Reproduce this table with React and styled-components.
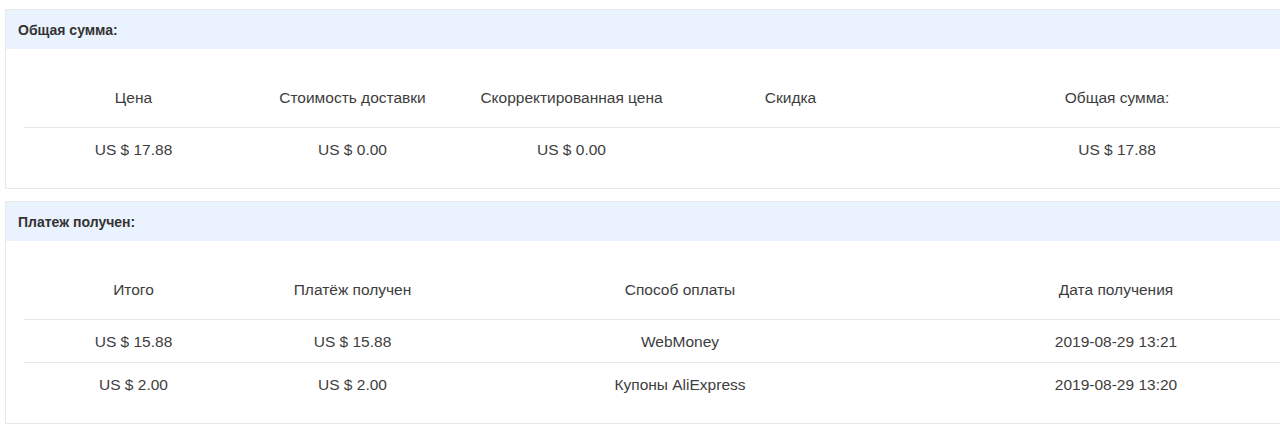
import React from "react";
import styled, {createGlobalStyle} from "styled-components";

const GlobalStyle = createGlobalStyle`
    html, body {
        margin: 0;
        padding: 0;
        background: #fff;
        overflow: hidden;
    }
    body {
        font-family: "Liberation Sans", Arial, sans-serif;
        color: #333;
    }
`

const Page = styled.div`
    display: flex;
    flex-direction: column;
    gap: 12px;
    padding: 9px 0 0 5px;
    width: 1360px;
`

const Panel = styled.section`
    border: 1px solid #e8e8e8;
    background: #fff;
`

const PanelHeader = styled.div`
    height: 39px;
    display: flex;
    align-items: center;
    padding: 1px 0 0 12px;
    box-sizing: border-box;
    background: #eaf2fd;
    font-size: 14px;
    font-weight: bold;
    color: #333;
`

const PanelBody = styled.div`
    padding: 20px 18px 18px 18px;
`

const Table = styled.table`
    width: 1310px;
    border-collapse: collapse;
    table-layout: fixed;
    font-size: 15.5px;
    color: #3d3d3d;
`

const HeadCell = styled.th`
    height: 58px;
    font-weight: normal;
    text-align: center;
    vertical-align: middle;
    border-bottom: 1px solid #e6e6e6;
    padding: 0;
`

const Cell = styled.td`
    height: 41px;
    text-align: center;
    vertical-align: middle;
    padding: 1px 0 0;
    border-bottom: ${p => (p.$last ? "none" : "1px solid #e6e6e6")};
`

const SummaryTable = ({title, widths, columns, rows}) => (
    <Panel>
        <PanelHeader>{title}</PanelHeader>
        <PanelBody>
            <Table>
                <colgroup>
                    {widths.map((w, i) => <col key={i} style={{width: w}}/>)}
                </colgroup>
                <thead>
                    <tr>
                        {columns.map((c, i) => <HeadCell key={i}>{c}</HeadCell>)}
                    </tr>
                </thead>
                <tbody>
                    {rows.map((r, ri) => (
                        <tr key={ri}>
                            {r.map((v, ci) => <Cell key={ci} $last={ri === rows.length - 1}>{v}</Cell>)}
                        </tr>
                    ))}
                </tbody>
            </Table>
        </PanelBody>
    </Panel>
);

const App = () => {
    return (
        <>
            <GlobalStyle/>
            <Page>
                <SummaryTable
                    title="Общая сумма:"
                    widths={[219, 219, 219, 219, 434]}
                    columns={["Цена", "Стоимость доставки", "Скорректированная цена", "Скидка", "Общая сумма:"]}
                    rows={[["US $ 17.88", "US $ 0.00", "US $ 0.00", "", "US $ 17.88"]]}
                />
                <SummaryTable
                    title="Платеж получен:"
                    widths={[219, 219, 436, 436]}
                    columns={["Итого", "Платёж получен", "Способ оплаты", "Дата получения"]}
                    rows={[
                        ["US $ 15.88", "US $ 15.88", "WebMoney", "2019-08-29 13:21"],
                        ["US $ 2.00", "US $ 2.00", "Купоны AliExpress", "2019-08-29 13:20"],
                    ]}
                />
            </Page>
        </>
    );
};

export default App;
